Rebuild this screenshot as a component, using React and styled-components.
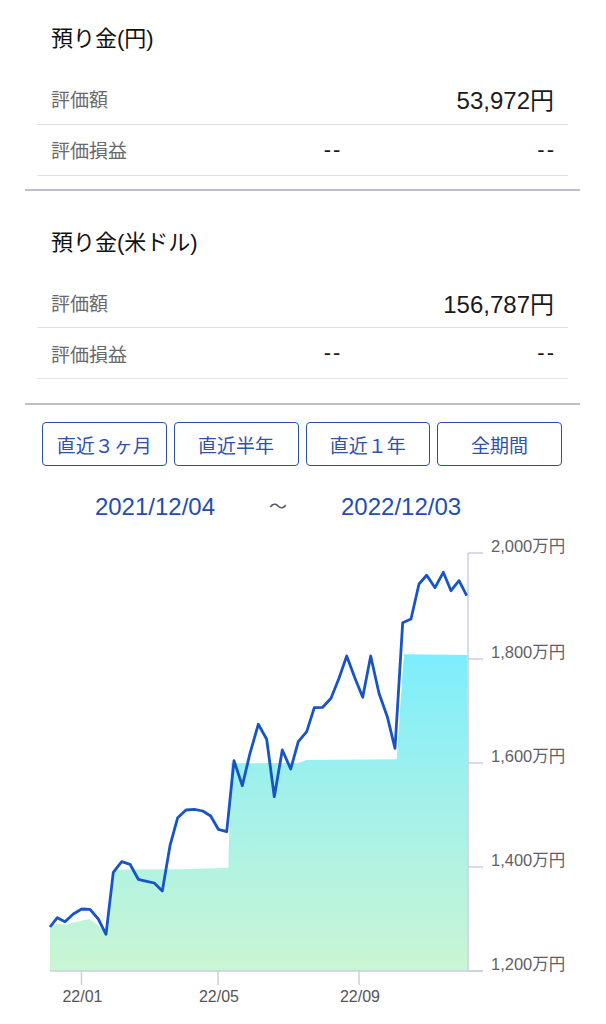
import React from 'react';
import styled, { createGlobalStyle } from 'styled-components';

const GlobalStyle = createGlobalStyle`
    body {
        margin: 0;
        background: #ffffff;
        font-family: "Liberation Sans", "Noto Sans CJK JP", sans-serif;
        color: #1a1a1a;
    }
`;

const Page = styled.div`
    width: 606px;
    min-height: 1024px;
    overflow: hidden;
`;

// 預り金 block
const Section = styled.section`
    margin: 0 26px 0 25px;
    padding-top: ${(props) => props.$top}px;
    padding-bottom: ${(props) => props.$bottom}px;
    border-bottom: 2px solid #bcbfcd;
`;

const Title = styled.h2`
    margin: 0;
    padding: 0 0 19.5px 26px;
    font-size: 22px;
    font-weight: 400;
    line-height: 30px;
    color: #111111;
`;

const Rows = styled.div`
    margin: 0 12px;
`;

const Row = styled.div`
    height: 50px;
    padding: 0 14px;
    display: grid;
    grid-template-columns: 252px 60px 1fr;
    align-items: center;
    border-bottom: 1px solid #e1e2e8;
`;

const Label = styled.span`
    font-size: 19px;
    color: #6a6a6a;
`;

const Mid = styled.span`
    text-align: center;
    font-size: 22px;
    letter-spacing: 2px;
    color: #1a1a1a;
`;

const Value = styled.span`
    text-align: right;
    font-size: ${(props) => (props.$dash ? 22 : 24)}px;
    letter-spacing: ${(props) => (props.$dash ? '2px' : '0')};
    margin-right: ${(props) => (props.$dash ? '-2px' : '0')};
    color: #1a1a1a;
`;

const PeriodBar = styled.div`
    padding: 17px 44px 0 42px;
    display: grid;
    grid-template-columns: repeat(4, 1fr);
    gap: 7px;
`;

const PeriodButton = styled.button`
    height: 44px;
    padding: 0;
    background: #ffffff;
    border: 1.5px solid #2c4fa6;
    border-radius: 4px;
    font-family: "Liberation Sans", "Noto Sans CJK JP", sans-serif;
    font-size: 19px;
    color: #2d52b0;
    cursor: pointer;
`;

const DateRange = styled.div`
    margin-top: 26px;
    padding-right: 50px;
    display: flex;
    justify-content: center;
    align-items: center;
    gap: 54px;
    line-height: 30px;
`;

const DateText = styled.span`
    font-size: 24px;
    color: #1f4db5;
`;

const Tilde = styled.span`
    font-size: 18px;
    color: #555a66;
`;

const ChartSvg = styled.svg`
    display: block;
    width: 606px;
    height: 502px;
`;

// 評価額の推移 (実測座標)
const valueLine = [
    [50, 927], [57.3, 917.7], [65, 921.7], [73.3, 914], [81.7, 909], [90, 909.3],
    [98.3, 919], [106, 934.3], [113.3, 872.3], [121.7, 861.7], [130, 864.3],
    [138.3, 879.3], [146.7, 881.3], [154.3, 883], [162.3, 891], [170, 845.7],
    [177.7, 817.7], [186, 810], [194.3, 809.3], [202.7, 811], [210.7, 816],
    [218.3, 829.3], [226.7, 831.7], [234, 760.7], [242.3, 785.7], [250, 753.3],
    [258.3, 724.3], [266.7, 739.3], [274.3, 796.7], [282.3, 750], [290.7, 769],
    [298.3, 741.7], [306.7, 731.7], [314.3, 707.7], [322.7, 707.3], [331, 698.3],
    [339, 678.3], [346.7, 656], [355, 678.3], [362.7, 697.3], [370.7, 656],
    [379, 693.3], [387.3, 716.7], [395, 748.3], [402.7, 622.7], [411, 619],
    [419, 584], [426.7, 575.3], [435, 587.7], [443.3, 572.3], [451, 590.7],
    [459, 580.7], [466.7, 595.7],
];

// 受渡金額 (階段状)
const principalArea = [
    [50, 925], [57, 924], [66, 924.5], [89, 919], [98, 925], [106, 934],
    [113, 869.5], [183, 869.3], [228.3, 867.7], [231, 763.3], [298, 763],
    [306.7, 760], [396.7, 759.3], [404, 654.3], [467.5, 655], [467.5, 971],
    [50, 971],
];

const yTicks = [
    { y: 553, label: '2,000万円' },
    { y: 659, label: '1,800万円' },
    { y: 763, label: '1,600万円' },
    { y: 867, label: '1,400万円' },
    { y: 971, label: '1,200万円' },
];

const xTicks = [
    { x: 81.5, label: '22/01' },
    { x: 218, label: '22/05' },
    { x: 359, label: '22/09' },
];

const periods = ['直近３ヶ月', '直近半年', '直近１年', '全期間'];

function AssetChart() {
    const linePoints = valueLine.map((p) => p.join(',')).join(' ');
    const areaPoints = principalArea.map((p) => p.join(',')).join(' ');
    const axisColor = '#c9cee2';
    const font = '"Liberation Sans", "Noto Sans CJK JP", sans-serif';

    return (
        <ChartSvg viewBox="0 522 606 502">
            <defs>
                <linearGradient id="principalFill" gradientUnits="userSpaceOnUse" x1="0" y1="655" x2="0" y2="971">
                    <stop offset="0" stopColor="#7deefc" />
                    <stop offset="0.5" stopColor="#a6f1e8" />
                    <stop offset="1" stopColor="#caf6d3" />
                </linearGradient>
            </defs>
            <polygon points={areaPoints} fill="url(#principalFill)" />
            <line x1="468" y1="553" x2="468" y2="971" stroke={axisColor} strokeWidth="1.5" />
            <line x1="50" y1="971" x2="483" y2="971" stroke={axisColor} strokeWidth="1.5" />
            {yTicks.map((t) => (
                <g key={t.label}>
                    <line x1="468" y1={t.y} x2="483" y2={t.y} stroke={axisColor} strokeWidth="1.5" />
                    <text x="491" y={t.y - 1} fontSize="16.5" fill="#5f6166" fontFamily={font}>
                        {t.label}
                    </text>
                </g>
            ))}
            {xTicks.map((t) => (
                <g key={t.label}>
                    <line x1={t.x} y1="971" x2={t.x} y2="985" stroke={axisColor} strokeWidth="1.5" />
                    <text x={t.x + 1} y="1002" fontSize="16" fill="#555" textAnchor="middle" fontFamily={font}>
                        {t.label}
                    </text>
                </g>
            ))}
            <polyline
                points={linePoints}
                fill="none"
                stroke="#1754c4"
                strokeWidth="2.8"
                strokeLinejoin="round"
            />
        </ChartSvg>
    );
}

function DepositSection({ title, amount, top, bottom }) {
    return (
        <Section $top={top} $bottom={bottom}>
            <Title>{title}</Title>
            <Rows>
                <Row>
                    <Label>評価額</Label>
                    <Mid />
                    <Value>{amount}</Value>
                </Row>
                <Row>
                    <Label>評価損益</Label>
                    <Mid>--</Mid>
                    <Value $dash>--</Value>
                </Row>
            </Rows>
        </Section>
    );
}

export default function App() {
    return (
        <Page>
            <GlobalStyle />
            <DepositSection title="預り金(円)" amount="53,972円" top={24} bottom={13} />
            <DepositSection title="預り金(米ドル)" amount="156,787円" top={37} bottom={24} />
            <PeriodBar>
                {periods.map((p) => (
                    <PeriodButton key={p}>{p}</PeriodButton>
                ))}
            </PeriodBar>
            <DateRange>
                <DateText>2021/12/04</DateText>
                <Tilde>〜</Tilde>
                <DateText>2022/12/03</DateText>
            </DateRange>
            <AssetChart />
        </Page>
    );
}
